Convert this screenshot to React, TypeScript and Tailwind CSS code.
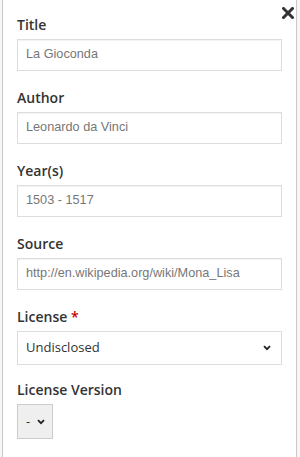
import React from "react";

function Chevron() {
  return (
    <svg width="8" height="6" viewBox="0 0 8 6" className="block">
      <polyline points="1,1.2 4,4.2 7,1.2" fill="none" stroke="#222" strokeWidth="1.8" />
    </svg>
  );
}

function Field({ label, value }: { label: string; value: string }) {
  return (
    <div className="mb-[17px]">
      <div className="text-[14px] leading-[20px] font-semibold text-[#333] mb-[4px]">{label}</div>
      <div className="h-[32px] border border-[#ddd] bg-white shadow-[inset_0_1px_1px_rgba(0,0,0,0.05)] flex items-center px-[8px] text-[12.7px] text-[#777] font-['Liberation_Sans',Arial,sans-serif]">
        {value}
      </div>
    </div>
  );
}

export default function App() {
  return (
    <div className="w-[300px] h-[457px] bg-[#f7f7f7] font-['Open_Sans',sans-serif] overflow-hidden">
      <div className="relative ml-[2px] w-[295px] h-full bg-white border-l border-r border-[#c8c8c8] pt-[15px] px-[14px]">
        <svg className="absolute right-[2px] top-[7px]" width="12" height="12" viewBox="0 0 12 12">
          <path d="M1.5 1.5 L10.5 10.5 M10.5 1.5 L1.5 10.5" stroke="#333" strokeWidth="3" strokeLinecap="square" />
        </svg>
        <Field label="Title" value="La Gioconda" />
        <Field label="Author" value="Leonardo da Vinci" />
        <Field label="Year(s)" value="1503 - 1517" />
        <Field label="Source" value="http://en.wikipedia.org/wiki/Mona_Lisa" />
        <div className="mb-[15px]">
          <div className="text-[14px] leading-[20px] font-semibold text-[#333] mb-[4px]">
            License<span className="text-[#c00]"> *</span>
          </div>
          <div className="h-[34px] border border-[#ddd] bg-white flex items-center justify-between pl-[8px] pr-[10px] text-[13px] text-[#333]">
            <span>Undisclosed</span>
            <Chevron />
          </div>
        </div>
        <div>
          <div className="text-[14px] leading-[20px] font-semibold text-[#333] mb-[4px]">License Version</div>
          <div className="w-[36px] h-[35px] border border-[#ccc] bg-[#efefef] flex items-center pl-[8px] gap-[7px] text-[13px] text-[#333]">
            <span>-</span>
            <Chevron />
          </div>
        </div>
      </div>
    </div>
  );
}
